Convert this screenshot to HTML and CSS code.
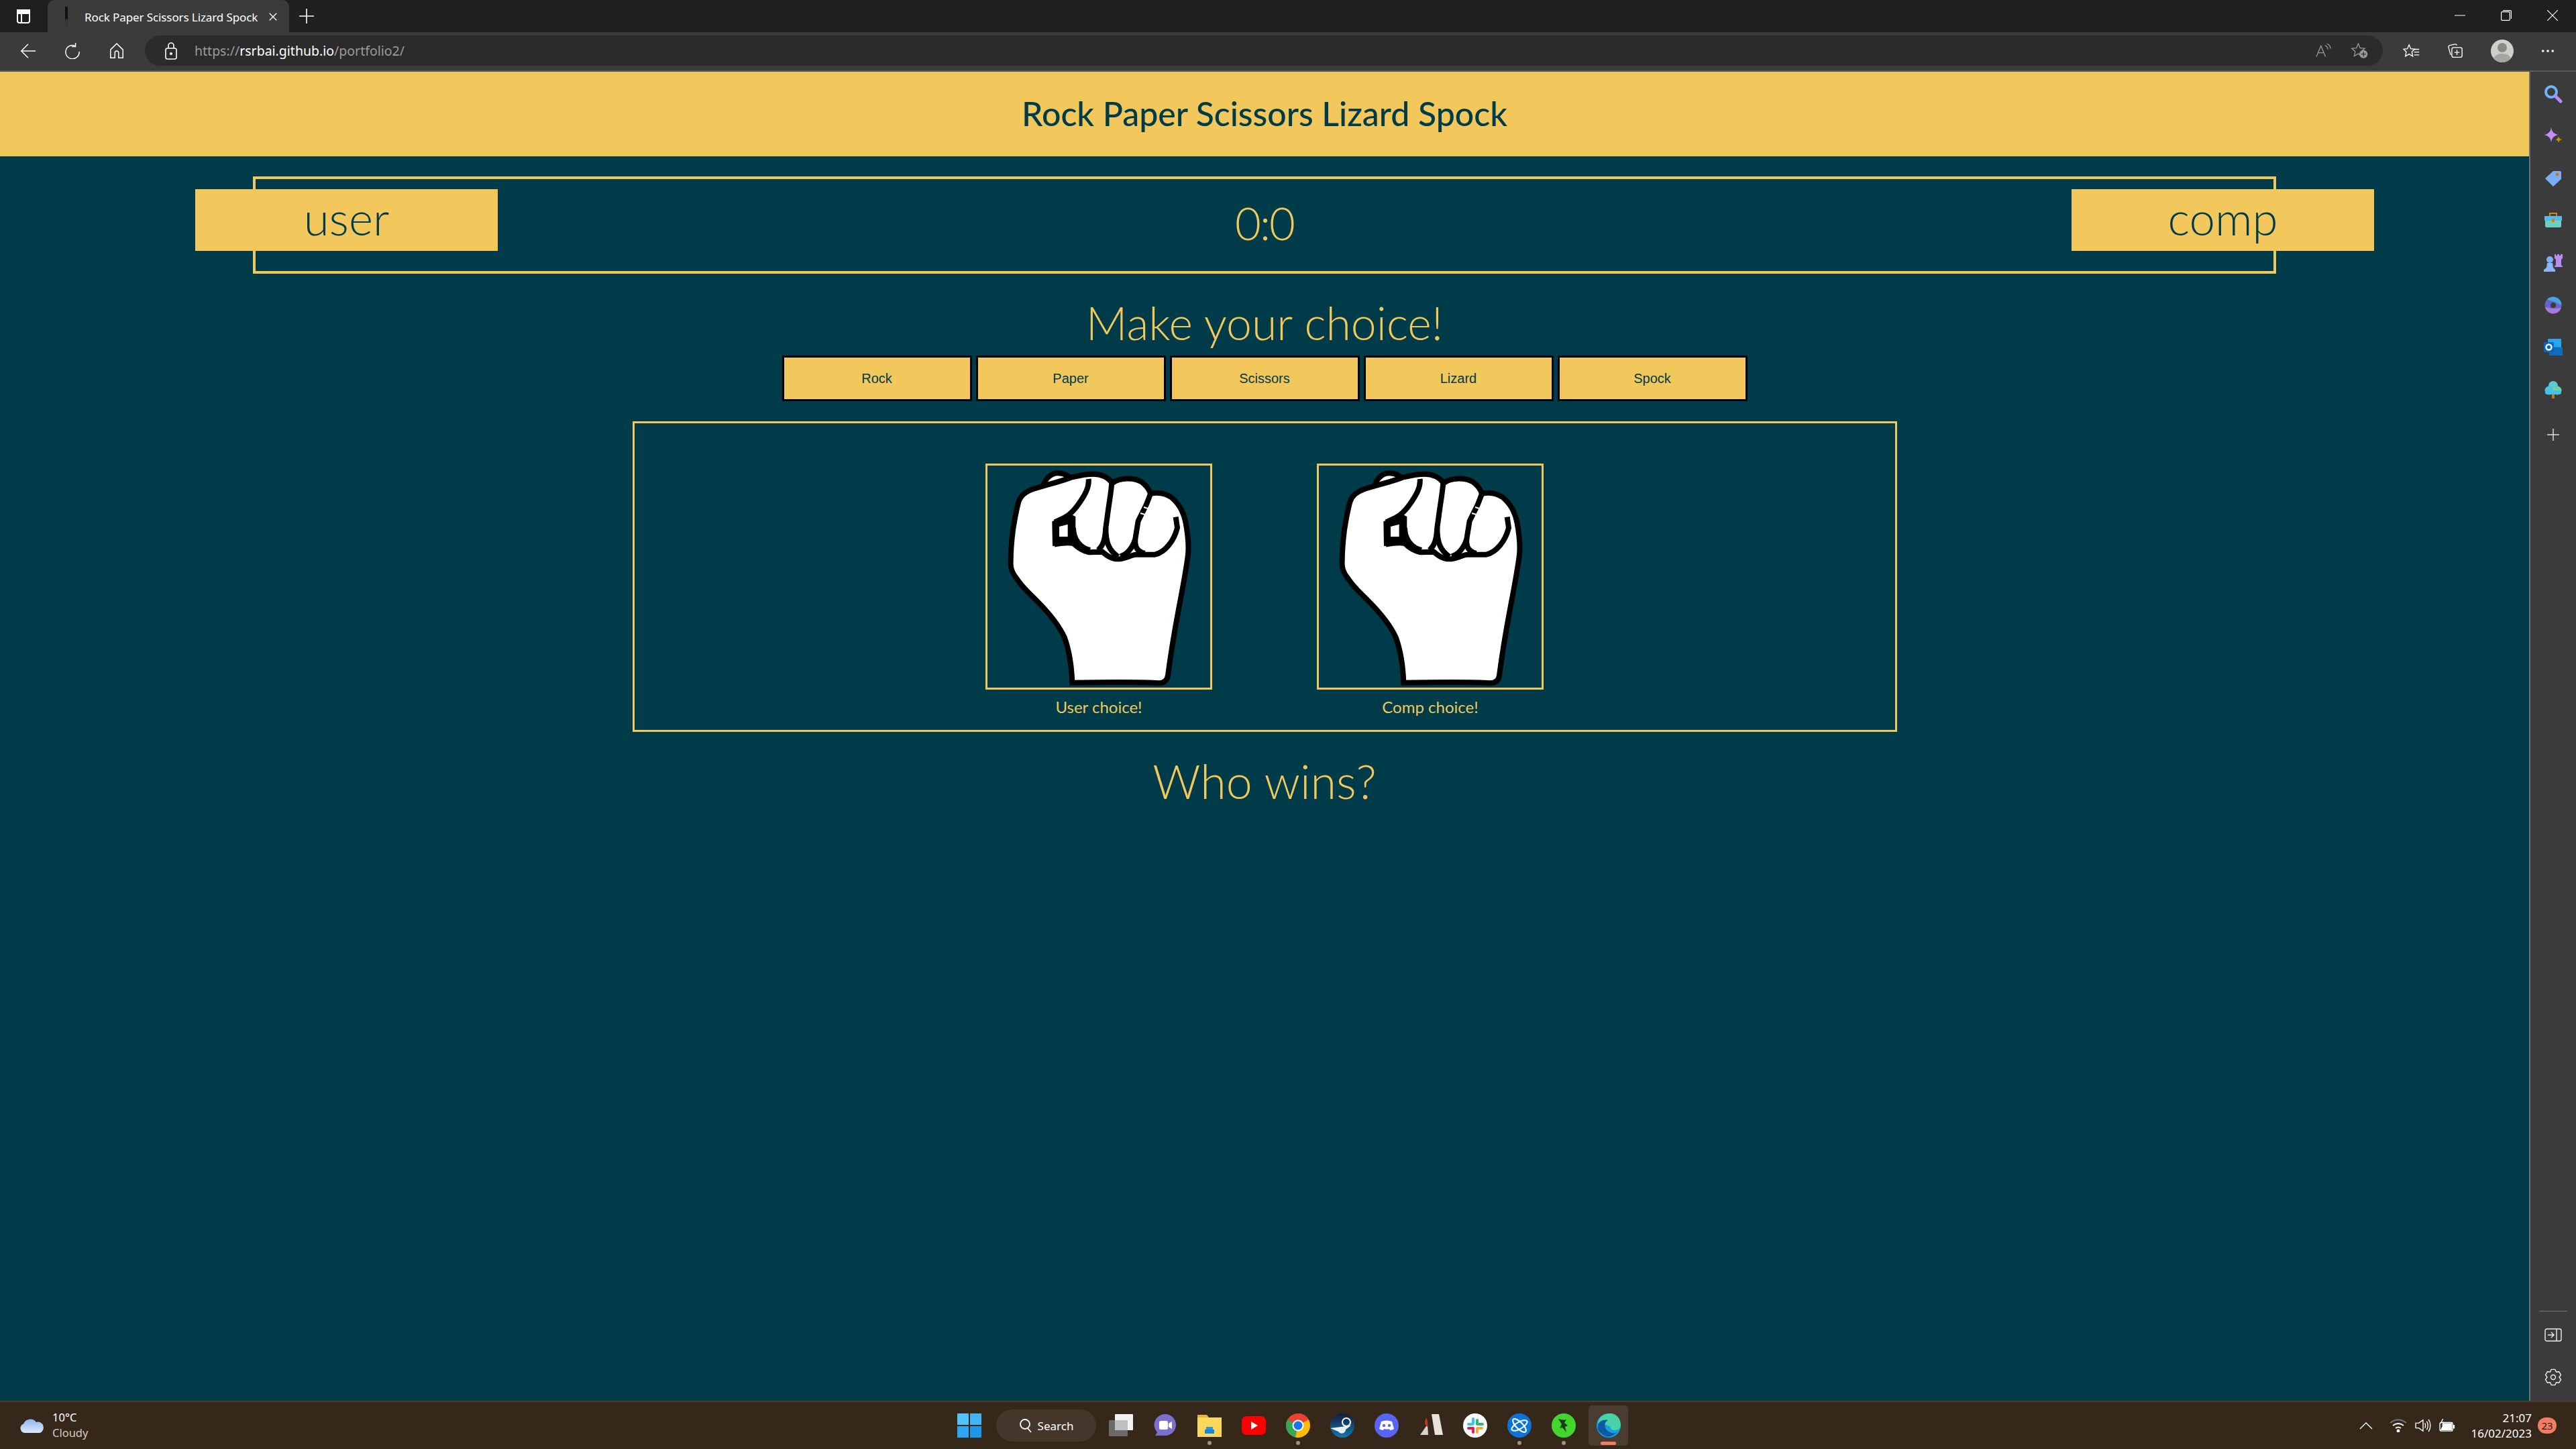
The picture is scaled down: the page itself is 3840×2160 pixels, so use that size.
FILE: index.html
```html
<!DOCTYPE html>
<html lang="en">
  <head>
    <title>Rock Paper Scissors Lizard Spock</title>
    <link rel="stylesheet" href="styles.css">
  </head>
  <body>
    <!-- Browser tab strip -->
    <div class="tabstrip">
      <div class="tabstrip-left">
        <svg class="tab-actions" width="26" height="26" viewBox="0 0 26 26" fill="none" stroke="#fff" stroke-width="2"><rect x="4" y="4" width="18" height="19" rx="3"/><path d="M4 9h18M10 9v14"/><path d="M4 4h18v5H4z" fill="#fff"/></svg>
        <div class="tab">
          <svg width="16" height="34" viewBox="0 0 16 34"><path d="M8 2v20" stroke="#111" stroke-width="4"/><path d="M8 20v12" stroke="#333" stroke-width="3"/></svg>
          <span class="tab-title">Rock Paper Scissors Lizard Spock</span>
          <svg width="14" height="14" viewBox="0 0 16 16" stroke="#fff" stroke-width="1.5"><path d="M2 2l12 12M14 2L2 14"/></svg>
        </div>
        <svg class="tab-new" width="22" height="22" viewBox="0 0 22 22" stroke="#fff" stroke-width="1.6"><path d="M11 0v22M0 11h22"/></svg>
      </div>
      <div class="window-btns">
        <svg width="16" height="16" viewBox="0 0 16 16" stroke="#fff" stroke-width="1"><path d="M0 8h16"/></svg>
        <svg width="16" height="16" viewBox="0 0 16 16" fill="none" stroke="#fff" stroke-width="1.2"><rect x="0.6" y="2.6" width="12.8" height="12.8" rx="1.5"/><path d="M3 .6h11a1.500 1.500 0 0 1 1.500 1.500V13"/></svg>
        <svg width="16" height="16" viewBox="0 0 16 16" stroke="#fff" stroke-width="1.2"><path d="M0 0l16 16M16 0L0 16"/></svg>
      </div>
    </div>

    <!-- Address bar -->
    <div class="toolbar">
      <svg class="nav-ico" width="24" height="24" viewBox="0 0 26 26" fill="none" stroke="#fff" stroke-width="1.6"><path d="M25 13H2M13 2L2 13l11 11"/></svg>
      <svg class="nav-ico" width="24" height="24" viewBox="0 0 26 26" fill="none" stroke="#fff" stroke-width="1.6"><path d="M17 4.500A11 11 0 1 0 24 14M18 0v6h-6"/></svg>
      <svg class="nav-ico" width="24" height="24" viewBox="0 0 26 26" fill="none" stroke="#fff" stroke-width="1.6"><path d="M3 24V11L13 1l10 10v13h-7v-8a3 3 0 0 0-6 0v8z"/></svg>
      <div class="address">
        <svg class="lock" width="20" height="26" viewBox="0 0 20 26" fill="none" stroke="#fff" stroke-width="1.6"><rect x="2" y="9" width="16" height="16" rx="2.5"/><path d="M6 9V5a4 4 0 0 1 8 0v4"/><circle cx="10" cy="17" r="1.2" fill="#fff"/></svg>
        <span class="url">https://<b>rsrbai.github.io</b>/portfolio2/</span>
        <span class="address-end">
          <svg width="24" height="22" viewBox="0 0 28 26" fill="none" stroke="#9a9a9a" stroke-width="1.5"><path d="M1 23L9 4l8 19M4 16h10M16 3c3 1 5 3 5 7M19 0c4 1 7 5 7 9"/></svg>
          <svg width="26" height="25" viewBox="0 0 30 28" fill="none" stroke="#9a9a9a" stroke-width="1.5"><path d="M12 2l3.200 7.500 8 .7-6 5.300 1.800 8-7-4.200-7 4.200 1.800-8-6-5.300 8-.7z"/><circle cx="21" cy="20" r="7" fill="#9a9a9a" stroke="none"/><path d="M21 16v8M17 20h8" stroke="#2b2b2b"/></svg>
        </span>
      </div>
      <div class="toolbar-end">
        <svg width="25" height="22" viewBox="0 0 30 26" fill="none" stroke="#fff" stroke-width="1.6"><path d="M11 2l3 7 7 .7-5 4.800 1.600 8-6.600-4-6.600 4 1.600-8-5-4.800 7-.7z"/><path d="M20 10h9M20 15h9M20 20h9"/></svg>
        <svg width="24" height="22" viewBox="0 0 28 26" fill="none" stroke="#fff" stroke-width="1.6"><path d="M6 20L2 6a3 3 0 0 1 2-3l10-2a3 3 0 0 1 3 2"/><rect x="8" y="7" width="18" height="17" rx="3"/><path d="M17 11v9M12.500 15.500h9"/></svg>
        <svg width="34" height="34" viewBox="0 0 34 34"><circle cx="17" cy="17" r="17" fill="#cfcfcb"/><circle cx="17" cy="12" r="7" fill="#8a8a88"/><path d="M4 28c3-6 8-7 13-7s10 1 13 7a17 17 0 0 1-26 0z" fill="#a5a5a2"/></svg>
        <svg width="20" height="6" viewBox="0 0 22 6" fill="#fff"><circle cx="3" cy="3" r="2"/><circle cx="11" cy="3" r="2"/><circle cx="19" cy="3" r="2"/></svg>
      </div>
    </div>

    <div class="window-body">
      <!-- The game page -->
      <main class="page">
        <header class="page-header"><h1>Rock Paper Scissors Lizard Spock</h1></header>

        <section class="scoreboard">
          <div class="player-badge player-badge-user">user</div>
          <div class="score">0:0</div>
          <div class="player-badge player-badge-comp">comp</div>
        </section>

        <h2 class="prompt">Make your choice!</h2>
        <div class="choices">
          <button class="choice">Rock</button>
          <button class="choice">Paper</button>
          <button class="choice">Scissors</button>
          <button class="choice">Lizard</button>
          <button class="choice">Spock</button>
        </div>

        <section class="arena">
          <figure class="hand">
            <div class="hand-box">
              <svg class="fist" viewBox="96 72 996 993"><use href="#fist-shape"/></svg>
            </div>
            <figcaption>User choice!</figcaption>
          </figure>
          <figure class="hand">
            <div class="hand-box">
              <svg class="fist" viewBox="96 72 996 993"><use href="#fist-shape"/></svg>
            </div>
            <figcaption>Comp choice!</figcaption>
          </figure>
        </section>

        <h2 class="result">Who wins?</h2>
      </main>

      <!-- Edge sidebar -->
      <aside class="sidebar">
        <div class="side-top">
          <svg width="28" height="28" viewBox="0 0 28 28" fill="none"><circle cx="11" cy="11" r="8" stroke="#6db1ff" stroke-width="4"/><path d="M17 17l8 8" stroke="#b68cf0" stroke-width="5" stroke-linecap="round"/></svg>
          <svg width="28" height="28" viewBox="0 0 28 28"><path d="M11 1q1 9 10 11-9 2-10 11-1-9-10-11 9-2 10-11z" fill="#c88cf5"/><path d="M22 14q.5 4 5 5-4.500 1-5 5-.5-4-5-5 4.500-1 5-5z" fill="#c58a10"/></svg>
          <svg width="28" height="28" viewBox="0 0 28 28"><path d="M2 14L14 3h10a2 2 0 0 1 2 2v10L14 26z" fill="#7aaef8"/><circle cx="20" cy="8" r="2.500" fill="#c97a10"/></svg>
          <svg width="28" height="28" viewBox="0 -2 28 28"><path d="M9 5V1h10v4" fill="none" stroke="#c58a10" stroke-width="2"/><rect x="1" y="5" width="26" height="7" fill="#58b8e8"/><path d="M2 12h24v8a2 2 0 0 1-2 2H4a2 2 0 0 1-2-2z" fill="#6fd0c0"/><rect x="12" y="9" width="4" height="5" fill="#c58a10"/></svg>
          <svg width="30" height="28" viewBox="0 0 30 28"><path d="M17 1h2v2h2V1h3v2h2V1h3v6l-2 2v8l2 2v1H17v-1l2-2V9l-2-2z" fill="#b88cf0"/><circle cx="10" cy="9" r="5" fill="#7ab0f8"/><path d="M6 14h8l1 7 3 3v3H1v-3l4-3z" fill="#8ab5fa"/></svg>
          <svg width="28" height="28" viewBox="0 0 28 28"><circle cx="14" cy="14" r="12.500" fill="#6b62c8"/><path d="M5 5.500A12.500 12.500 0 0 1 26.500 14L17 9z" fill="#3fa8e0"/><path d="M2 17l12 2 12-1A12.500 12.500 0 0 1 2 17z" fill="#a97ad8"/><circle cx="14" cy="14" r="4" fill="#3b3b3b"/></svg>
          <svg width="28" height="28" viewBox="0 -1 28 28"><rect x="6" y="0" width="20" height="14" rx="1" fill="#28a8ea"/><path d="M8 12l20 1v11a1 1 0 0 1-1 1H8z" fill="#0f6cbd"/><rect x="0" y="5" width="15" height="15" rx="1.500" fill="#0a64c0"/><circle cx="7.500" cy="12.500" r="4" fill="none" stroke="#fff" stroke-width="2.400"/></svg>
          <svg width="26" height="28" viewBox="0 0 26 28"><circle cx="13" cy="8" r="7" fill="#5ec9d8"/><circle cx="7" cy="15" r="6.500" fill="#4cc4e0"/><circle cx="19" cy="15" r="6.500" fill="#6fd0a8"/><rect x="1" y="15" width="24" height="6" rx="3" fill="#48c0e0"/><rect x="11" y="21" width="4" height="6" fill="#b5791c"/></svg>
          <svg class="side-add" width="20" height="20" viewBox="0 0 20 20" stroke="#ddd" stroke-width="1.500"><path d="M10 1v18M1 10h18"/></svg>
        </div>
        <div class="side-bottom">
          <div class="side-rule"></div>
          <svg width="26" height="20" viewBox="0 0 26 20" fill="none" stroke="#eee" stroke-width="1.400"><rect x="1" y="1" width="24" height="18" rx="2.500"/><path d="M18 1v18M5 10h8M10 6l4 4-4 4"/></svg>
          <svg width="26" height="26" viewBox="0 0 26 26" fill="none" stroke="#eee" stroke-width="1.400" stroke-linejoin="round"><circle cx="13" cy="13" r="3.500"/><path d="M10.100 1.400h5.800l1.600 3.800 4.100-.5 2.900 5-2.500 3.300 2.500 3.300-2.900 5-4.100-.5-1.600 3.800h-5.800l-1.600-3.800-4.100.5-2.900-5L4 13 1.500 9.700l2.900-5 4.100.5z"/></svg>
        </div>
      </aside>
    </div>

    <!-- Windows taskbar -->
    <footer class="taskbar">
      <div class="weather">
        <svg width="38" height="24" viewBox="0 0 38 24"><defs><linearGradient id="cloud" x1="0" y1="0" x2="0" y2="1"><stop offset="0" stop-color="#8fb8f0"/><stop offset="1" stop-color="#dce8fb"/></linearGradient></defs><path d="M8 23a7 7 0 0 1-2-13.500A11 11 0 0 1 25 7a8 8 0 0 1 5 16z" fill="url(#cloud)"/></svg>
        <div class="weather-text"><span>10°C</span><span class="weather-sub">Cloudy</span></div>
      </div>

      <div class="task-icons">
        <svg width="36" height="36" viewBox="0 0 36 36"><rect x="0" y="0" width="17" height="17" fill="#4fc3f7"/><rect x="19" y="0" width="17" height="17" fill="#40b4f4"/><rect x="0" y="19" width="17" height="17" fill="#2aa6f2"/><rect x="19" y="19" width="17" height="17" fill="#1f96ec"/></svg>
        <div class="task-search">
          <svg width="20" height="22" viewBox="0 0 20 22" fill="none" stroke="#fff" stroke-width="1.800"><circle cx="9" cy="9" r="7"/><path d="M13 15l5 6"/></svg>
          <span>Search</span>
        </div>
        <svg width="36" height="36" viewBox="0 0 36 36"><rect x="0" y="10" width="28" height="24" rx="1" fill="#6a6a6a"/><rect x="9" y="1" width="27" height="24" rx="1" fill="#f2f2f2"/><rect x="9" y="10" width="19" height="15" fill="#c0c0c0"/></svg>
        <svg width="36" height="36" viewBox="0 0 36 36"><path d="M18 1a16 16 0 0 1 0 32H3l3-5A16 16 0 0 1 18 1z" fill="#7b6fd0"/><rect x="9" y="11" width="13" height="13" rx="2.500" fill="#fff"/><path d="M23 15l5-3v11l-5-3z" fill="#fff"/></svg>
        <div class="task-running">
          <svg width="36" height="36" viewBox="0 0 36 36"><path d="M0 2h14l3 4h19v29H0z" fill="#f0b429"/><path d="M0 6h36v29H0z" fill="#fbd75b"/><path d="M11 24h14v6H11z" fill="#1a86d8"/><path d="M13 20h10v4H13z" fill="#2a96e8"/></svg>
        </div>
        <svg width="36" height="36" viewBox="0 0 36 36"><rect x="0" y="4" width="36" height="28" rx="7" fill="#ff0000"/><path d="M14 12l10 6-10 6z" fill="#fff"/></svg>
        <div class="task-running">
          <svg width="36" height="36" viewBox="0 0 36 36"><circle cx="18" cy="18" r="18" fill="#e94235"/><path d="M18 18L2.400 9A18 18 0 0 0 14 35.500z" fill="#34a853"/><path d="M18 18l15.600-9A18 18 0 0 1 14 35.500z" fill="#fbbc05"/><path d="M18 0a18 18 0 0 1 15.600 9H18z" fill="#e94235"/><circle cx="18" cy="18" r="8.500" fill="#fff"/><circle cx="18" cy="18" r="6.500" fill="#1a73e8"/></svg>
        </div>
        <svg width="36" height="36" viewBox="0 0 36 36"><defs><linearGradient id="steam" x1="0" y1="0" x2="0" y2="1"><stop offset="0" stop-color="#111d3a"/><stop offset="1" stop-color="#1478b0"/></linearGradient></defs><circle cx="18" cy="18" r="18" fill="url(#steam)"/><path d="M0 22l12 5a6 6 0 0 0 11-3l8-6" fill="#e8eef5"/><circle cx="24" cy="13" r="6" fill="none" stroke="#fff" stroke-width="2"/></svg>
        <svg width="36" height="36" viewBox="0 0 36 36"><circle cx="18" cy="18" r="18" fill="#5865f2"/><path d="M10 12q8-3 16 0l3 11q-3 2-6 2l-1-2q-4 1-8 0l-1 2q-3 0-6-2z" fill="#fff"/><circle cx="14" cy="18" r="2.200" fill="#5865f2"/><circle cx="22" cy="18" r="2.200" fill="#5865f2"/></svg>
        <svg width="36" height="36" viewBox="0 0 36 36"><path d="M19 1h11l6 31H24z" fill="#e8e4dc"/><path d="M2 32l11-16 1 16z" fill="#d8d4cc"/><path d="M11 6q3 5 2 14-4-2-4-8z" fill="#c0391b"/></svg>
        <svg width="36" height="36" viewBox="0 0 36 36"><circle cx="18" cy="18" r="18" fill="#fff"/><rect x="13" y="6" width="4" height="11" rx="2" fill="#36c5f0"/><rect x="6" y="14" width="10" height="4" rx="2" fill="#36c5f0"/><rect x="19" y="8" width="4" height="10" rx="2" fill="#2eb67d"/><rect x="21" y="14" width="10" height="4" rx="2" fill="#2eb67d"/><rect x="19" y="20" width="4" height="10" rx="2" fill="#ecb22e"/><rect x="20" y="20" width="10" height="4" rx="2" fill="#ecb22e"/><rect x="13" y="20" width="4" height="10" rx="2" fill="#e01e5a"/><rect x="6" y="20" width="10" height="4" rx="2" fill="#e01e5a"/></svg>
        <div class="task-running">
          <svg width="36" height="36" viewBox="0 0 36 36"><circle cx="18" cy="18" r="18" fill="#0c74d8"/><g fill="none" stroke="#fff" stroke-width="2"><ellipse cx="18" cy="18" rx="13" ry="5" transform="rotate(45 18 18)"/><ellipse cx="18" cy="18" rx="13" ry="5" transform="rotate(-30 18 18)"/></g></svg>
        </div>
        <div class="task-running">
          <svg width="36" height="36" viewBox="0 0 36 36"><circle cx="18" cy="18" r="18" fill="#44d62c"/><path d="M10 8q8 3 12 1l-3 5 5 4-4 2 2 8-6-7-4 1 3-6z" fill="#173d12"/></svg>
        </div>
        <div class="task-active">
          <svg width="36" height="36" viewBox="0 0 36 36"><circle cx="18" cy="18" r="18" fill="#1b9de2"/><path d="M2 14C4 3 14 0 20 0c9 0 16 7 16 17 0 5-4 8-8 8-5 0-8-2-7-5-8-4-13-4-19-6z" fill="#47d3a5"/><path d="M2 24C0 12 10 8 17 10c-6 3-7 12 1 17 5 3 9 3 12 1-5 6-13 9-20 4-4-3-7-5-8-8z" fill="#0c59a4"/></svg>
          <i class="task-pill"></i>
        </div>
      </div>

      <div class="tray">
        <svg class="tray-chevron" width="20" height="12" viewBox="0 0 20 12" fill="none" stroke="#fff" stroke-width="1.400"><path d="M1 11l9-9 9 9"/></svg>
        <svg width="26" height="20" viewBox="0 0 26 20" fill="none" stroke="#fff" stroke-width="1.800"><path d="M1 6q12-9 24 0" stroke="#777"/><path d="M5 10q8-6 16 0M9 14q4-3 8 0"/><circle cx="13" cy="18" r="1.500" fill="#fff"/></svg>
        <svg width="24" height="20" viewBox="0 0 26 22" fill="none" stroke="#fff" stroke-width="1.500"><path d="M1 7h5l7-5v18l-7-5H1z"/><path d="M16 7q2 4 0 8M19 4q4 7 0 14M22 1q6 10 0 20"/></svg>
        <svg width="24" height="20" viewBox="0 0 26 22" fill="none" stroke="#fff" stroke-width="1.500"><rect x="1" y="6" width="21" height="14" rx="2.500"/><path d="M3 18l5-10h12v10z" fill="#fff"/><path d="M24 10v6" stroke-width="2.500"/><path d="M6 0L3 6h4l-2 5"/></svg>
        <div class="clock"><span>21:07</span><span>16/02/2023</span></div>
        <span class="notif-count">23</span>
      </div>
    </footer>

    <!-- Fist drawn once, used by both hands -->
    <svg class="defs-only" width="0" height="0">
      <defs>
        <g id="fist-shape" fill="none" stroke="#000" stroke-width="24">
          <path d="M345 165C355 125 385 106 410 106 435 106 455 115 468 130" fill="#fff"/>
          <path fill="#fff" d="M475 1043C472 960 462 900 440 840 415 785 360 720 315 675 280 640 250 615 225 575 205 550 198 530 200 500 200 440 205 400 210 360 218 310 225 270 235 235 245 205 265 190 300 177 350 160 420 145 470 125 500 118 530 110 570 110 610 110 635 125 655 150 690 125 750 125 785 145 805 160 818 175 825 198 855 190 890 195 920 215 955 245 975 285 983 330 992 380 998 420 993 470 985 540 965 640 950 720 935 800 915 920 903 1010 900 1035 885 1045 860 1045 800 1040 700 1040 475 1043Z"/>
          <path d="M548 132C552 170 530 205 510 235 490 265 470 290 440 305L397 325"/>
          <path d="M395 425C430 418 460 415 480 420 500 440 525 455 550 460L610 458C630 475 650 490 680 490 710 490 730 475 760 470L845 470C890 460 930 410 945 350L938 302"/>
          <path d="M480 350C480 400 510 440 555 450"/>
          <path d="M652 150C648 200 638 250 632 300L625 350C622 400 615 430 590 450"/>
          <path d="M625 350C625 420 640 450 680 480"/>
          <path d="M825 198C815 225 808 245 800 260L770 320 757 400C745 440 720 470 690 478"/>
          <path d="M757 400C755 420 755 455 800 465"/>
          <path d="M385 322L470 290 490 300V405L480 425 387 432Z" fill="#000" stroke="none"/>
          <path d="M417 345L455 335V390H417Z" fill="#fff" stroke="none"/>
          <path d="M795 258L813 264M780 285L800 291" stroke="#fff" stroke-width="6"/>
        </g>
      </defs>
    </svg>
  </body>
</html>
```

FILE: styles.css
```css
* { box-sizing: border-box; }

body {
  margin: 0;
  width: 3840px;
  height: 2160px;
  display: flex;
  flex-direction: column;
  overflow: hidden;
  background: #003b49;
  font-family: "Noto Sans", "Open Sans", sans-serif;
  color: #fff;
}

svg { flex-shrink: 0; display: block; }
.defs-only { position: absolute; }

/* Tab strip */
.tabstrip {
  height: 48px;
  background: #1f1f1f;
  display: flex;
  justify-content: space-between;
  padding-left: 22px;
}
.tabstrip-left { display: flex; align-items: center; }
.tab {
  width: 360px;
  height: 48px;
  margin-left: 23px;
  padding: 2px 17px 0 20px;
  background: #3b3b3b;
  border-radius: 10px 10px 0 0;
  display: flex;
  align-items: center;
}
.tab-title {
  flex: 1;
  margin-left: 19px;
  font-size: 17px;
  letter-spacing: -0.1px;
  white-space: nowrap;
}
.tab-new { margin-left: 15px; }
.window-btns {
  display: flex;
  align-items: center;
  gap: 53px;
  padding: 0 27px 2px 0;
}

/* Address bar */
.toolbar {
  height: 59px;
  padding: 6px 0 8px 30px;
  background: #3b3b3b;
  border-bottom: 2px solid #5a5a5a;
  display: flex;
  align-items: center;
}
.nav-ico { margin-right: 42px; }
.address {
  width: 3336px;
  height: 45px;
  margin-left: -12px;
  padding: 0 21px 0 29px;
  background: #2b2b2b;
  border-radius: 23px;
  display: flex;
  align-items: center;
}
.url { margin-left: 25px; font-size: 19.5px; color: #9a9a9a; }
.url b { font-weight: 400; color: #fff; }
.address-end { margin-left: auto; display: flex; align-items: center; gap: 29px; }
.toolbar-end {
  flex: 1;
  display: flex;
  align-items: center;
  gap: 41px;
  padding-left: 30px;
}

/* Middle of the window */
.window-body { flex: 1; display: flex; min-height: 0; }

.page {
  width: 3770px;
  background: #003b49;
  font-family: Lato, "Open Sans", sans-serif;
  font-weight: 300;
  color: #f2c75c;
  display: flex;
  flex-direction: column;
  align-items: center;
}
.page-header {
  align-self: stretch;
  height: 126px;
  padding-bottom: 2px;
  background: #f2c75c;
  display: flex;
  align-items: center;
  justify-content: center;
}
.page-header h1 {
  margin: 0;
  font-size: 50px;
  font-weight: 500;
  color: #003b49;
}

.scoreboard {
  width: 3016px;
  height: 145px;
  margin-top: 30px;
  padding-top: 15px;
  border: 4px solid #f2c75c;
  display: grid;
  grid-template-columns: 1fr auto 1fr;
  align-items: start;
}
.player-badge {
  width: 451px;
  height: 92px;
  background: #f2c75c;
  color: #003b49;
  font-size: 69px;
  line-height: 86px;
  text-align: center;
}
.player-badge-user { justify-self: start; margin-left: -90px; }
.player-badge-comp { justify-self: end; margin-right: -150px; }
.score {
  font-size: 67px;
  line-height: 100px;
  letter-spacing: -2px;
}

.prompt, .result {
  margin: 0;
  font-weight: 300;
}
.prompt { margin-top: 32px; font-size: 68px; line-height: 82px; }
.result { margin-top: 28px; font-size: 70px; line-height: 90px; }

.choices { margin-top: 8px; display: flex; gap: 6px; }
.choice {
  width: 283px;
  height: 68px;
  padding: 0;
  background: #f2c75c;
  border: 3px solid #000;
  color: #003b49;
  font-family: "Liberation Sans", sans-serif;
  font-size: 20px;
}

.arena {
  width: 1885px;
  height: 463px;
  margin-top: 30px;
  padding-top: 60px;
  border: 3px solid #f2c75c;
  display: flex;
  justify-content: center;
  gap: 156px;
}
.hand { margin: 0; }
.hand-box {
  width: 338px;
  height: 337px;
  border: 3px solid #f2c75c;
}
.fist { width: 332px; height: 331px; }
.hand figcaption {
  margin-top: 11px;
  font-size: 24px;
  font-weight: 400;
  text-align: center;
}

/* Edge sidebar */
.sidebar {
  flex: 1;
  background: #3b3b3b;
  border-left: 2px solid #6e6e6e;
  display: flex;
  flex-direction: column;
  justify-content: space-between;
  align-items: center;
  padding: 19px 0 22px;
}
.side-top, .side-bottom {
  display: flex;
  flex-direction: column;
  align-items: center;
}
.side-top { gap: 35px; }
.side-add { margin-top: 8px; }
.side-bottom { gap: 40px; }
.side-rule { width: 42px; height: 1px; margin-bottom: -15px; background: #777; }

/* Taskbar */
.taskbar {
  height: 72px;
  flex-shrink: 0;
  background: #35271a;
  border-top: 2px solid #4a3d30;
  display: flex;
  align-items: center;
  padding: 0 29px;
}
.weather {
  width: 1398px;
  display: flex;
  align-items: center;
  gap: 11px;
}
.weather-text {
  display: flex;
  flex-direction: column;
  padding-bottom: 2px;
  font-size: 16.5px;
  line-height: 23px;
}
.weather-sub { color: #cfcac4; }
.task-icons {
  display: flex;
  align-items: center;
  gap: 30px;
}
.task-search {
  width: 149px;
  height: 48px;
  margin: 0 -11px 0 -8px;
  background: #44362a;
  border-radius: 24px;
  display: flex;
  align-items: center;
  justify-content: center;
  gap: 8px;
  font-size: 17px;
}
.task-running { position: relative; }
.task-running::after {
  content: "";
  position: absolute;
  left: 15px;
  bottom: -11px;
  width: 6px;
  height: 6px;
  border-radius: 50%;
  background: #9a938c;
}
.task-active {
  width: 59px;
  height: 60px;
  margin: 0 -11px;
  background: #4a3c30;
  border-radius: 5px;
  display: flex;
  flex-direction: column;
  align-items: center;
  padding-top: 12px;
  gap: 6px;
}
.task-pill { width: 23px; height: 5px; border-radius: 3px; background: #f47c62; }
.tray { display: flex; align-items: center; gap: 12px; margin-left: auto; }
.tray-chevron { margin-right: 13px; }
.clock {
  width: 90px;
  display: flex;
  flex-direction: column;
  align-items: flex-end;
  margin-left: 12px;
  font-size: 17px;
  line-height: 23px;
  white-space: nowrap;
}
.notif-count {
  width: 28px;
  height: 24px;
  margin-left: -3px;
  background: #f47c62;
  border-radius: 12px;
  color: #2a1a10;
  font-size: 15px;
  line-height: 24px;
  text-align: center;
}
```
